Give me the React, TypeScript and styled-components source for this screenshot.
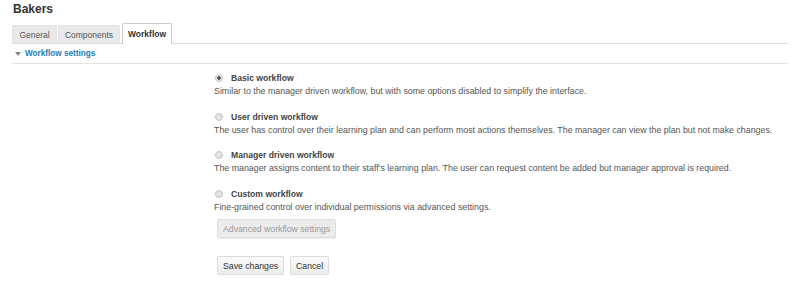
import React from "react";
import styled, { createGlobalStyle } from "styled-components";

const Global = createGlobalStyle`
  html, body { margin: 0; padding: 0; background: #fff; }
  body { font-family: "Liberation Sans", Arial, sans-serif; color: #333; font-size: 9px; }
`;

const Page = styled.div`
  width: 776px;
  padding: 0 0 0 12px;
`;

const Title = styled.h2`
  margin: 0;
  padding: 2px 0 0 1px;
  height: 22px;
  box-sizing: border-box;
  font-size: 12px;
  font-weight: bold;
  color: #333;
  line-height: 14px;
`;

const TabBar = styled.div`
  display: flex;
  align-items: flex-end;
  gap: 1px;
  height: 21px;
  border-bottom: 1px solid #ddd;
`;

const Tab = styled.div<{ $active?: boolean; $w: number }>`
  width: ${(p) => p.$w}px;
  height: ${(p) => (p.$active ? "21px" : "18px")};
  box-sizing: border-box;
  display: flex;
  align-items: center;
  justify-content: center;
  font-size: 8.5px;
  font-weight: ${(p) => (p.$active ? "bold" : "normal")};
  color: ${(p) => (p.$active ? "#333" : "#555")};
  background: ${(p) => (p.$active ? "#fff" : "#e9e9e9")};
  border: 1px solid ${(p) => (p.$active ? "#ccc" : "#e2e2e2")};
  border-bottom: none;
  border-radius: 2px 2px 0 0;
  margin-left: ${(p) => (p.$active ? "1px" : "0")};
  margin-bottom: ${(p) => (p.$active ? "-1px" : "0")};
`;

const SectionHead = styled.div`
  display: flex;
  align-items: center;
  gap: 4px;
  height: 19px;
  padding-left: 3px;
  border-bottom: 1px solid #e3e3e3;
  color: #1e7bb8;
  font-weight: bold;
  font-size: 8.2px;
`;

const Caret = styled.span`
  width: 0;
  height: 0;
  border-left: 3px solid transparent;
  border-right: 3px solid transparent;
  border-top: 4px solid #888;
`;

const Form = styled.div`
  padding-left: 202px;
  padding-top: 7px;
  display: flex;
  flex-direction: column;
`;

const Option = styled.div`
  display: flex;
  flex-direction: column;
  margin-bottom: 11.5px;
`;

const OptionLabel = styled.label`
  display: flex;
  align-items: center;
  gap: 8px;
  height: 14px;
  padding-left: 1px;
  font-weight: bold;
  font-size: 8.6px;
  color: #444;
`;

const Radio = styled.span<{ $checked?: boolean }>`
  width: 6px;
  height: 6px;
  border-radius: 50%;
  border: 1px solid #c4c4c4;
  background: ${(p) =>
    p.$checked
      ? "radial-gradient(circle, #555 0 1.5px, #e6e6e6 2.1px)"
      : "#e4e4e4"};
`;

const Desc = styled.div`
  font-size: 8.84px;
  color: #555;
  line-height: 13px;
  white-space: nowrap;
`;

const Button = styled.button<{ $disabled?: boolean }>`
  font-family: "Liberation Sans", Arial, sans-serif;
  font-size: 8.7px;
  height: 19px;
  padding: 0 5px;
  border: 1px solid #ddd;
  border-radius: 2px;
  background: ${(p) => (p.$disabled ? "#ececec" : "linear-gradient(#fafafa, #ececec)")};
  color: ${(p) => (p.$disabled ? "#999" : "#333")};
  box-shadow: 0 1px 1px rgba(0, 0, 0, 0.08);
`;

const AdvRow = styled.div`
  display: flex;
  margin-top: -6px;
  padding-left: 3px;
`;

const Actions = styled.div`
  display: flex;
  gap: 6px;
  margin-top: 18px;
  padding-left: 3px;
`;

const options = [
  {
    label: "Basic workflow",
    desc: "Similar to the manager driven workflow, but with some options disabled to simplify the interface.",
    checked: true,
  },
  {
    label: "User driven workflow",
    desc: "The user has control over their learning plan and can perform most actions themselves. The manager can view the plan but not make changes.",
  },
  {
    label: "Manager driven workflow",
    desc: "The manager assigns content to their staff's learning plan. The user can request content be added but manager approval is required.",
  },
  {
    label: "Custom workflow",
    desc: "Fine-grained control over individual permissions via advanced settings.",
  },
];

export default function App() {
  return (
    <Page>
      <Global />
      <Title>Bakers</Title>
      <TabBar>
        <Tab $w={45}>General</Tab>
        <Tab $w={62}>Components</Tab>
        <Tab $w={50} $active>
          Workflow
        </Tab>
      </TabBar>
      <SectionHead>
        <Caret />
        Workflow settings
      </SectionHead>
      <Form>
        {options.map((o) => (
          <Option key={o.label}>
            <OptionLabel>
              <Radio $checked={o.checked} />
              {o.label}
            </OptionLabel>
            <Desc>{o.desc}</Desc>
          </Option>
        ))}
        <AdvRow>
          <Button $disabled>Advanced workflow settings</Button>
        </AdvRow>
        <Actions>
          <Button>Save changes</Button>
          <Button>Cancel</Button>
        </Actions>
      </Form>
    </Page>
  );
}
